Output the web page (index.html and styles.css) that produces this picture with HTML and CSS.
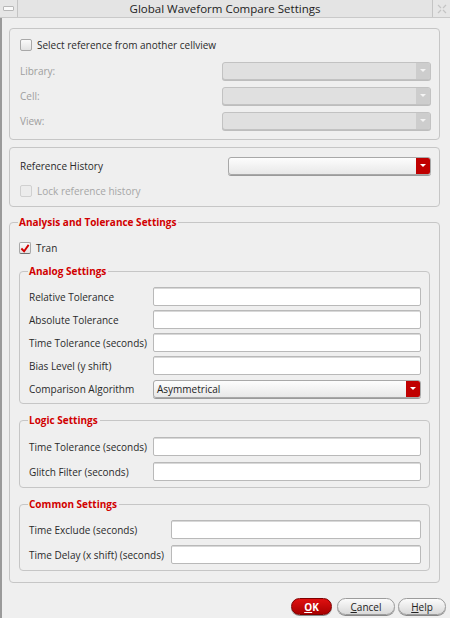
FILE: index.html
```html
<!DOCTYPE html>
<html>
<head>
	<meta charset="utf-8">
	<title>Global Waveform Compare Settings</title>
	<link rel="stylesheet" href="styles.css">
</head>
<body>
	<div class="window">
		<div class="titlebar">
			<span class="tb-btn tb-min"><span class="min-bar"></span></span>
			<span class="tb-title">Global Waveform Compare Settings</span>
			<span class="tb-btn tb-close">
				<svg width="12" height="12" viewBox="0 0 12 12">
					<path d="M2 2 L5 5 M10 2 L7 5 M2 10 L5 7 M10 10 L7 7" stroke="#c4c4c4" stroke-width="1.2" fill="none"/>
				</svg>
			</span>
		</div>

		<div class="content">
			<fieldset class="group g-cellview">
				<label class="check-row"><span class="check"></span>Select reference from another cellview</label>
				<div class="form-row disabled">
					<span class="lbl">Library:</span>
					<span class="combo combo-off"><span class="combo-btn"></span></span>
				</div>
				<div class="form-row disabled">
					<span class="lbl">Cell:</span>
					<span class="combo combo-off"><span class="combo-btn"></span></span>
				</div>
				<div class="form-row disabled">
					<span class="lbl">View:</span>
					<span class="combo combo-off"><span class="combo-btn"></span></span>
				</div>
			</fieldset>

			<fieldset class="group g-history">
				<div class="form-row">
					<span class="lbl">Reference History</span>
					<span class="combo combo-red wide"><span class="combo-btn"></span></span>
				</div>
				<label class="check-row disabled"><span class="check"></span>Lock reference history</label>
			</fieldset>

			<fieldset class="group g-analysis">
				<legend>Analysis and Tolerance Settings</legend>
				<label class="check-row"><span class="check checked">
					<svg width="11" height="11" viewBox="0 0 11 11"><path d="M1.5 5.5 L4.5 8.5 L9.5 1.5" stroke="#d40000" stroke-width="2" fill="none"/></svg>
				</span>Tran</label>

				<fieldset class="sub analog">
					<legend>Analog Settings</legend>
					<div class="field"><span class="lbl">Relative Tolerance</span><span class="input"></span></div>
					<div class="field"><span class="lbl">Absolute Tolerance</span><span class="input"></span></div>
					<div class="field"><span class="lbl">Time Tolerance (seconds)</span><span class="input"></span></div>
					<div class="field"><span class="lbl">Bias Level (y shift)</span><span class="input"></span></div>
					<div class="field"><span class="lbl">Comparison Algorithm</span><span class="combo combo-red value">Asymmetrical<span class="combo-btn"></span></span></div>
				</fieldset>

				<fieldset class="sub logic">
					<legend>Logic Settings</legend>
					<div class="field"><span class="lbl">Time Tolerance (seconds)</span><span class="input"></span></div>
					<div class="field"><span class="lbl">Glitch Filter (seconds)</span><span class="input"></span></div>
				</fieldset>

				<fieldset class="sub common">
					<legend>Common Settings</legend>
					<div class="field"><span class="lbl">Time Exclude (seconds)</span><span class="input"></span></div>
					<div class="field"><span class="lbl">Time Delay (x shift) (seconds)</span><span class="input"></span></div>
				</fieldset>
			</fieldset>

			<div class="buttons">
				<button class="btn btn-ok"><u>O</u>K</button>
				<button class="btn btn-cancel"><u>C</u>ancel</button>
				<button class="btn btn-help"><u>H</u>elp</button>
			</div>
		</div>
	</div>
</body>
</html>
```

FILE: styles.css
```css
body {
	margin: 0;
	padding: 0;
	background-color: #efefef;
	font-family: "Open Sans", "Noto Sans", sans-serif;
	font-size: 10px;
	color: #2a2a2a;
}

.window {
	width: 450px;
	height: 618px;
	background-color: #efefef;
	border-left: 2px solid #9a9a9a;
	box-sizing: border-box;
}

.titlebar {
	display: flex;
	height: 17px;
	background-color: #e4e4e4;
	border-bottom: 1px solid #c9c9c9;
	margin-left: -2px;
}

.tb-btn {
	width: 17px;
	display: flex;
	align-items: center;
	justify-content: center;
	background-color: #e6e6e6;
}

.tb-min {
	border-right: 1px solid #c4c4c4;
}

.min-bar {
	width: 9px;
	height: 3px;
	background-color: #fafafa;
	border: 1px solid #b8b8b8;
	border-radius: 1px;
}

.tb-close {
	border-left: 1px solid #c4c4c4;
}

.tb-title {
	flex: 1;
	text-align: center;
	font-size: 11.5px;
	line-height: 17px;
	color: #222;
}

.content {
	padding: 10px 10px 0 7px;
}

.group {
	margin: 0 0 7px 0;
	border: 1px solid #c6c6c6;
	border-radius: 4px;
	padding: 6px 8px 6px 10px;
}

.group legend, .sub legend {
	color: #d10000;
	font-weight: bold;
	padding: 0 2px 0 1px;
	margin-left: -1px;
	line-height: 12px;
}

.check-row {
	display: flex;
	align-items: center;
	height: 20px;
	gap: 5px;
}

.check {
	width: 10px;
	height: 10px;
	border: 1px solid #a8a8a8;
	border-radius: 2px;
	background: linear-gradient(#fafafa, #e2e2e2);
	display: flex;
	align-items: center;
	justify-content: center;
}

.check.checked {
	border-bottom-color: #707070;
}

.check-row.disabled {
	color: #a6a6a6;
}

.check-row.disabled .check {
	border-color: #d0d0d0;
	background: #ececec;
}

.form-row {
	display: flex;
	align-items: center;
	justify-content: space-between;
	height: 25px;
}

.form-row.disabled .lbl {
	color: #9e9e9e;
}

.combo {
	display: flex;
	align-items: center;
	width: 209px;
	height: 18px;
	border: 1px solid #b4b4b4;
	border-radius: 3px;
	box-sizing: border-box;
}

.combo.wide {
	width: 203px;
}

.combo-off {
	background-color: #e0e0e0;
	border-color: #c2c2c2;
	box-shadow: 0 1px 0 #bdbdbd;
}

.combo-btn {
	margin-left: auto;
	width: 14px;
	height: 100%;
	border-radius: 0 2px 2px 0;
	display: flex;
	align-items: center;
	justify-content: center;
}

.combo-btn::after {
	content: "";
	border-left: 3px solid transparent;
	border-right: 3px solid transparent;
	border-top: 3px solid #fff;
}

.combo-off .combo-btn {
	background-color: #cdcdcd;
}

.combo-off .combo-btn::after {
	border-top-color: #f4f4f4;
}

.combo-red {
	background: linear-gradient(#fdfdfd, #e8e8e8);
	border-color: #a8a8a8;
	box-shadow: 0 1px 0 #9a9a9a;
}

.combo-red .combo-btn {
	background-color: #c00000;
}

.combo.value {
	padding-left: 3px;
	color: #222;
}

.g-cellview .check-row {
	margin-bottom: 3px;
}

.g-history {
	padding-top: 5px;
	padding-bottom: 5px;
	margin-bottom: 9px;
}

.g-history .check-row {
	margin-top: 3px;
}

.g-analysis {
	padding: 10px 9px 11px 9px;
	margin-bottom: 15px;
}

.g-analysis > .check-row {
	margin-bottom: 7px;
}

.sub {
	margin: 0;
	border: 1px solid #c6c6c6;
	border-radius: 4px;
	padding: 8px 8px 3px 9px;
}

.logic {
	margin-top: 10px;
}

.common {
	margin-top: 10px;
	padding-top: 7px;
}

.field {
	display: flex;
	align-items: center;
	height: 25px;
}

.analog .field {
	height: 23px;
}

.field .lbl {
	width: 124px;
	flex: none;
}

.common .field .lbl {
	width: 142px;
}

.input {
	flex: 1;
	height: 19px;
	background-color: #fff;
	border: 1px solid #b9b9b9;
	border-radius: 2px;
	box-shadow: inset 0 1px 0 #d8d8d8;
	box-sizing: border-box;
}

.field .combo {
	flex: 1;
	width: auto;
}

.buttons {
	display: flex;
	justify-content: flex-end;
	margin-right: -6px;
}

.btn {
	height: 17px;
	padding: 0;
	font-family: "Open Sans", "Noto Sans", sans-serif;
	font-size: 10px;
	color: #222;
	border: 1px solid #9c9c9c;
	border-radius: 9px;
	background: linear-gradient(#fbfbfb, #d9d9d9);
	box-shadow: 0 1px 0 #888;
}

.btn-ok {
	width: 41px;
	color: #fff;
	font-weight: bold;
	border-color: #7e0000;
	background: linear-gradient(#e01010, #a80000);
}

.btn-cancel {
	width: 58px;
	margin-left: 5px;
}

.btn-help {
	width: 48px;
	margin-left: 3px;
}
```
